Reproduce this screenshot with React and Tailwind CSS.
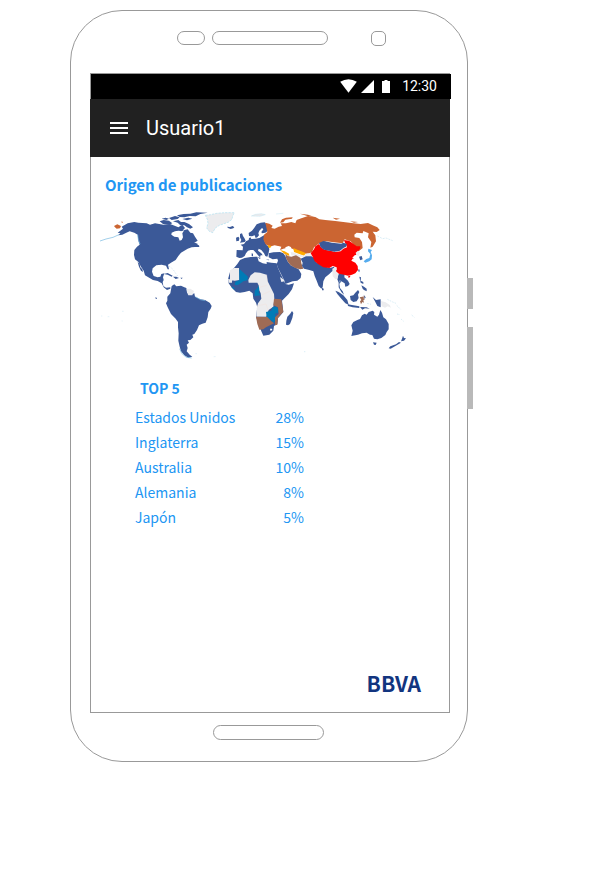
const countries = [
  { name: 'Estados Unidos', share: '28%' },
  { name: 'Inglaterra', share: '15%' },
  { name: 'Australia', share: '10%' },
  { name: 'Alemania', share: '8%' },
  { name: 'Japón', share: '5%' },
];

const BLUE = '#3b5998';
const ORANGE = '#cb6532';
const BROWN = '#9f6b55';
const TEAL = '#007bb6';
const GRAY = '#ececee';
const SKY = '#55acee';
const AMBER = '#ffaa00';

function WorldMap() {
  return (
    <svg viewBox="0 0 1005 495" className="block w-full" role="img" aria-label="Mapa de origen de publicaciones">
      {/* Americas */}
      <g fill={BLUE}>
        <path d="M76 92L84 86 80 80 98 70 118 66 130 68 155 70 165 74 180 70 205 74 225 72 235 76 250 82 262 74 270 84 262 92 250 92 240 94 230 98 229 104 238 110 250 112 254 122 260 120 264 112 262 100 268 90 278 88 286 98 294 100 300 110 308 122 298 128 292 132 312 136 313 141 300 141 290 142 278 146 268 152 258 158 250 168 242 180 228 188 219 194 222 208 218 208 213 197 200 194 184 196 173 205 171 215 176 228 188 232 196 230 199 222 208 220 204 232 206 240 203 246 205 258 213 263 226 262 226 266 216 270 206 262 200 250 188 243 174 240 160 232 150 226 146 212 138 200 130 186 120 178 117 165 118 150 126 140 134 134 130 122 128 104 118 98 104 94 94 98 82 104 70 106 76 100 68 98z" />
        <path d="M128 186L134 192 136 202 142 208 144 216 138 212 132 200z" />
        <path d="M194 64L206 60 222 62 232 70 222 74 204 72zM200 56L212 53 222 56 214 60zM222 54L240 48 254 52 248 57 230 60zM234 64L250 60 258 66 268 66 282 72 294 82 286 86 276 82 268 76 256 76 248 68zM246 46L266 42 286 41 304 37 338 38 316 42 302 49 284 48 268 52 254 51zM262 57L280 53 292 56 276 61zM250 89L260 86 267 91 258 94z" />
        <path d="M206 222L218 219 233 227 230 230 218 224zM234 230L244 230 252 234 242 237zM256 233L263 233 260 237zM285 126L300 128 309 132 304 138 294 136z" />
        <path d="M230 258L238 253 244 259 258 257 268 262 274 264 276 276 288 284 298 280 300 290 316 298 330 300 344 308 350 318 347 326 340 336 338 352 332 368 322 371 312 376 306 390 298 402 292 404 295 412 286 420 278 421 282 428 275 434 278 444 275 454 284 464 292 470 280 473 268 466 258 454 254 440 250 422 251 400 249 382 249 366 242 356 228 342 218 322 213 310 217 302 217 290 226 280z" />
        <path d="M181 292l4 1 1 4-4-1z" />
      </g>
      <path d="M275 267L286 266 297 273 292 286 280 286 276 277z" fill={GRAY} />
      <path d="M57 78L67 73 78 78 75 85 65 86 60 82zM78 65h5l1 3-5-1z" fill={ORANGE} />
      <g fill="none" stroke="#72b7df" strokeWidth="2">
        <path d="M15 123L33 117 54 112 72 104M128 104L130 118 135 132M254 446L260 460 274 472 290 474M301 290L316 299 330 302" />
        <path d="M222 198L234 208 242 220 248 228" stroke="#c9dfec" strokeDasharray="5 4" />
        <path d="M18 348h4m16 2h5m38-16h5m-6 29h3m218 98h5m50 9h6" stroke="#d9edf6" />
      </g>
      {/* Europe, Africa and the Middle East */}
      <g transform="translate(315)">
        <path d="M16 46L32 44 50 40 75 38 103 38 98 48 96 58 86 66 70 72 58 76 46 84 38 98 28 94 20 84 24 70 22 58z" fill={GRAY} stroke="#addff0" strokeWidth="2" strokeDasharray="7 3" />
        <path d="M154 48L166 43 184 41 196 44 180 49zM228 42L250 40" fill={GRAY} stroke="#addff0" strokeWidth="1" />
        <g fill={BLUE}>
          <path d="M81 80L90 81 98 78 103 82 100 85 92 87 84 84z" />
          <path d="M108 113L115 110 118 114 117 122 109 124zM120 102L126 100 129 108 133 114 137 122 134 126 120 128 124 120 120 112z" />
          <path d="M147 108L146 99 156 92 163 83 170 73 182 68 194 67 199 72 202 82 204 92 196 98 186 100 184 96 190 88 186 84 178 92 175 100 177 106 172 112 167 114 164 106 156 109z" />
          <path d="M110 150L128 151 129 140 122 134 132 132 138 124 146 120 147 115 151 112 154 117 166 116 178 114 192 106 194 124 200 136 206 140 208 148 206 158 204 164 202 170 196 168 192 160 184 150 176 146 174 152 184 160 188 166 182 166 180 172 174 166 166 156 160 150 152 150 144 152 138 160 134 168 126 173 118 174 109 170z" />
          <path d="M172 172L182 173 180 177zM155 160L159 161 159 169 155 168zM197 178L208 179 206 181z" />
          <path d="M206 160L220 157 240 156 250 160 256 168 260 178 264 186 272 196 284 202 296 208 304 222 302 234 292 242 278 244 262 250 256 252 252 240 242 220 234 204 230 192 234 182 232 176 218 178 206 172z" />
          <path d="M112 192L120 180 134 174 152 171 172 170 176 184 188 190 200 192 200 186 214 188 230 190 234 204 242 222 250 238 256 252 266 254 282 250 276 268 266 282 254 294 246 302 248 318 250 336 240 348 234 354 232 372 222 378 220 392 208 404 190 407 184 394 178 378 168 350 172 322 168 308 160 296 158 280 148 272 134 276 120 278 108 276 96 264 86 250 84 238 90 216 102 204z" />
          <path d="M276 333L280 339 277 354 270 372 264 376 258 374 259 362 262 350 270 342z" />
        </g>
        <path d="M90 211L102 204 117 204 118 240 104 242 90 240zM145 240L152 226 164 217 180 218 200 224 203 244 212 262 222 282 223 298 220 320 206 330 199 350 169 350 170 325 174 310 184 296 182 280 176 266 176 256 172 248 146 248zM240 231L250 238 254 244 244 246zM84 236L96 240 96 248 86 248z" fill={GRAY} />
        <path d="M200 224L203 246M178 262L200 256M184 286L212 272M170 318L198 312 204 330" stroke="#f5ddd4" fill="none" />
        <path d="M118 207L144 230 142 241 130 244 122 250 112 256 104 254 106 245 118 241zM94 261L102 262 104 270zM164 272L174 262 176 256 178 268 176 278 182 286 164 288zM198 336L214 332 218 321 230 320 236 330 234 338 224 342 230 352 222 368 214 362 200 352z" fill={TEAL} />
        <path d="M222 296L244 298 247 316 250 336 240 346 234 354 232 374 225 376 225 352 236 342 234 322 220 316zM168 350L202 351 214 364 222 370 210 376 198 382 190 388 178 389 172 372z" fill={BROWN} />
        <path d="M210 386L216 386 217 391 211 392z" fill="#fff" />
      </g>
      {/* Asia and Oceania */}
      <g transform="translate(615)">
        <path d="M-104 68L-92 71 -82 77 -86 84 -76 86 -64 80 -54 78 -58 70 -42 70 -26 66 -14 70 -10 60 4 55 24 48 46 51 58 58 76 60 106 63 130 66 160 70 182 72 204 69 218 76 232 82 239 90 230 96 218 95 226 106 228 124 218 140 211 143 214 126 204 112 206 100 190 93 188 100 170 98 163 104 164 112 178 114 186 126 188 144 178 152 168 158 168 140 152 124 134 118 128 130 96 126 80 124 58 130 42 142 36 156 24 162 8 158 -20 148 -32 142 -50 146 -60 150 -56 140 -76 136 -92 140 -104 132 -110 118 -108 104 -98 96z" fill={ORANGE} />
        <path d="M-60 68L-54 58 -42 53 -22 52 -24 56 -44 59 -50 67zM0 41L24 44 42 50 22 48zM98 53L120 56 108 59zM150 64L174 66 162 68z" fill={ORANGE} />
        <path d="M-90 146L-84 140 -76 144 -68 138 -58 142 -62 148 -52 156 -66 156 -76 153 -88 154zM-44 142L-34 138 -26 142 -30 148 -24 156 -22 168 -32 168 -36 158 -42 152z" fill="#fff" />
        <path d="M-96 134L-86 138 -90 145 -96 141zM-60 150L-46 154 -33 161 -32 168 -46 162zM-20 144L-6 150 8 155 18 160 12 167 -2 162 -18 156z" fill={AMBER} />
        <path d="M-28 156L-16 158 -2 164 10 167 22 160 34 160 38 170 22 170 0 170 -14 168 -26 166z" fill={GRAY} />
        <path d="M-44 162L-36 168 -26 170 -12 166 2 174 4 190 10 206 0 208 -14 204 -28 196 -36 186 -42 174z" fill={BROWN} />
        <g fill={BLUE}>
          <path d="M2 176L18 169 34 169 42 174 48 186 68 198 90 204 103 200 102 210 94 216 88 222 76 232 70 244 68 262 64 266 56 258 50 242 44 228 40 214 28 210 12 206 6 198 8 188zM66 263L71 266 71 271 66 271z" />
          <path d="M115 222L124 218 134 220 133 232 144 242 149 252 144 258 136 260 134 250 124 244 118 252 120 264 128 274 132 284 124 276 116 262 116 248 112 238z" />
          <path d="M106 272L116 276 130 286 142 300 146 314 136 310 124 296 112 282zM143 313L160 316 178 319 178 324 158 322 144 318zM180 321L200 322 209 326 195 325 187 329z" />
          <path d="M150 288L160 286 166 278 174 270 178 276 174 284 176 294 170 304 160 306 152 300zM178 230L183 232 182 242 190 246 190 252 182 248zM184 256L192 260 200 266 200 274 192 270 188 266zM175 208L179 209 178 217 175 214zM191 284L197 292 194 297zM177 170L185 168 188 178 181 181z" />
          <path d="M218 291L228 300 242 298 242 322 232 318 226 306z" />
          <path d="M154 376L160 366 172 360 180 357 186 346 194 341 200 344 206 336 218 332 223 336 222 344 232 350 237 344 241 330 246 338 250 352 258 358 266 372 266 388 260 396 256 405 244 414 232 418 222 416 217 405 210 404 200 398 186 400 174 404 154 408 158 392zM219 427L230 428 227 435 222 434zM309 407L312 414 318 415 312 422 303 424 306 416zM297 426L303 428 290 436 272 446 266 445 271 439 288 433z" />
        </g>
        <path d="M32 160L42 148 46 139 57 132 63 142 74 149 90 152 106 156 122 154 130 146 141 142 138 134 134 126 132 120 147 122 158 130 170 139 181 139 180 146 174 154 170 164 164 166 157 173 163 178 158 176 154 182 166 188 173 198 174 210 166 220 156 224 144 227 132 224 116 221 108 214 110 202 98 198 88 204 70 202 54 192 44 184 38 170zM145 228L151 227 150 232 145 233z" fill="#ff0000" />
        <path d="M57 129L70 123 82 125 96 128 110 130 124 131 130 128 141 132 138 140 130 144 120 152 104 155 88 152 72 149 62 142z" fill={BLUE} />
        <path d="M167 158L174 152 180 158 176 168 169 166zM97 206L106 201 111 207 107 214 116 222 112 236 106 238 98 228zM243 303L257 307 269 315 273 323 263 319 255 323 245 319z" fill={GRAY} />
        <path d="M205 146L216 150 212 156 216 166 215 178 208 184 196 188 191 184 199 177 208 174 211 162 204 154z" fill={SKY} />
        <path d="M179 292L195 289 190 294 195 298 190 300 192 308 187 306 183 313 180 304 184 300z" fill={BROWN} />
        <g fill="none" stroke="#c8e6f2" strokeWidth="2">
          <path d="M262 298L278 306 288 310M290 316L302 328M335 345L343 352M291 342L300 344M303 357L311 364" strokeDasharray="5 3" />
          <path d="M232 108L248 116 258 114 278 122M12 455h4M120 241l-1 10M201 310l12 3" strokeDasharray="6 3" />
        </g>
      </g>
    </svg>
  );
}

function StatusBar() {
  return (
    <div className="-mr-0.5 flex h-[25px] items-center justify-end bg-black pr-[14px] pb-px text-white">
      <svg viewBox="0 0 50 42" className="mr-1 h-[14px] w-[17px]" fill="currentColor" aria-hidden="true">
        <path d="M0 8Q25-7 50 8L25 41z" />
      </svg>
      <svg viewBox="0 0 13 13" className="mr-2 size-[13px]" fill="currentColor" aria-hidden="true">
        <path d="M13 0v13H0z" />
      </svg>
      <svg viewBox="0 0 8 13" className="mr-3 h-[13px] w-2" fill="currentColor" aria-hidden="true">
        <path d="M2.5 0h3v1H8v12H0V1h2.5z" />
      </svg>
      <span className="font-['Roboto',sans-serif] text-sm">12:30</span>
    </div>
  );
}

function AppBar() {
  return (
    <header className="-mx-px flex h-[58px] items-center gap-[18px] bg-[#212121] px-5 text-white">
      <button type="button" aria-label="Abrir menú" className="flex w-[18px] flex-col gap-[3px]">
        <span className="h-0.5 bg-white" />
        <span className="h-0.5 bg-white" />
        <span className="h-0.5 bg-white" />
      </button>
      <h1 className="font-['Roboto',sans-serif] text-xl">Usuario1</h1>
    </header>
  );
}

export default function App() {
  return (
    <div className="flex min-h-screen items-start bg-white pt-[10px] pl-[70px] font-['Noto_Sans_CJK_SC','Noto_Sans',sans-serif] text-[#2196f3]">
      <div className="w-full max-w-[398px] rounded-[52px] border border-[#999] pr-[17px] pl-[19px]">
        <div className="flex h-[62px] items-start pt-5 pl-[87px]">
          <span className="h-[14px] w-7 rounded-full border border-[#999]" />
          <span className="ml-[7px] h-[14px] w-[116px] rounded-full border border-[#999]" />
          <span className="ml-[43px] size-[15px] rounded-[5px] border border-[#999]" />
        </div>

        <div className="flex min-h-[640px] flex-col border border-[#999]">
          <StatusBar />
          <AppBar />
          <main className="flex grow flex-col">
            <h2 className="mt-4 pl-[14px] text-[15px] leading-6 font-bold">Origen de publicaciones</h2>
            <div className="mt-[3px] pr-[19px] pl-1">
              <WorldMap />
            </div>
            <table className="ml-11 w-[169px] text-sm">
              <caption className="mt-[11px] mb-[5px] pl-[5px] text-left text-sm leading-6 font-bold">TOP 5</caption>
              <tbody>
                {countries.map((c) => (
                  <tr key={c.name} className="leading-[25px]">
                    <th scope="row" className="p-0 text-left font-normal">{c.name}</th>
                    <td className="p-0 text-right">{c.share}</td>
                  </tr>
                ))}
              </tbody>
            </table>
            <div className="mt-auto mr-7 mb-4 self-end text-[21px] leading-[26px] font-bold text-[#12357f]">BBVA</div>
          </main>
        </div>

        <div className="flex h-12 items-start justify-center pt-3 pr-1">
          <span className="h-[15px] w-[111px] rounded-full border border-[#999]" />
        </div>
      </div>
      <div className="-ml-px flex shrink-0 flex-col gap-[18px] pt-[268px]">
        <span className="h-[31px] w-1.5 bg-[#b9b9b9]" />
        <span className="h-[82px] w-1.5 bg-[#b9b9b9]" />
      </div>
    </div>
  );
}
